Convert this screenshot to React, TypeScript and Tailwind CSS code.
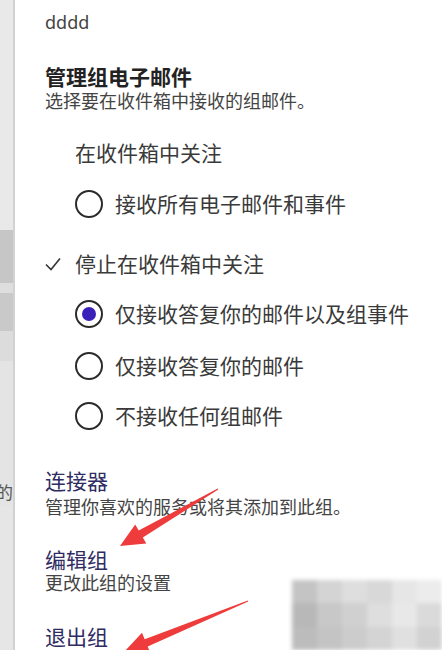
import React from "react";

const font = { fontFamily: '"Noto Sans", "Noto Sans CJK SC", sans-serif' };

type Pt = [number, number];

// tapered red arrow, computed from tail and tip
function arrowPoints(tail: Pt, tip: Pt) {
  const dx = tip[0] - tail[0];
  const dy = tip[1] - tail[1];
  const len = Math.hypot(dx, dy);
  const ux = dx / len;
  const uy = dy / len;
  const nx = -uy;
  const ny = ux;
  const headLen = 24;
  const bx = tip[0] - ux * headLen;
  const by = tip[1] - uy * headLen;
  const p = (x: number, y: number, w: number) => `${(x + nx * w).toFixed(1)},${(y + ny * w).toFixed(1)}`;
  return [
    p(tail[0], tail[1], 0.6),
    p(bx, by, 4),
    p(bx, by, 11),
    `${tip[0]},${tip[1]}`,
    p(bx, by, -11),
    p(bx, by, -4),
    p(tail[0], tail[1], -0.6),
  ].join(" ");
}

function Radio({ checked, label }: { checked?: boolean; label: string }) {
  return (
    <div className="flex items-center h-[30px] pl-[30px] gap-[12px]">
      <div className="w-[28px] h-[28px] rounded-full border-2 border-[#2b2b2b] flex items-center justify-center shrink-0">
        {checked && <div className="w-[14px] h-[14px] rounded-full bg-[#3a20b8]" />}
      </div>
      <span className="text-[21px] leading-[30px] text-[#3a3a3a]">{label}</span>
    </div>
  );
}

const pixelCells = [
  "bg-[#c4c4c4]", "bg-[#d4d4d4]", "bg-[#dedede]", "bg-[#d8d8d8]", "bg-[#e6e6e6]", "bg-[#ececec]",
  "bg-[#b8b8b8]", "bg-[#c8c8c8]", "bg-[#d0d0d0]", "bg-[#dedede]", "bg-[#e8e8e8]", "bg-[#dadada]",
  "bg-[#bcbcbc]", "bg-[#c4c4c4]", "bg-[#cccccc]", "bg-[#d4d4d4]", "bg-[#e0e0e0]", "bg-[#d2d2d2]",
];

export default function App() {
  return (
    <div className="relative w-[442px] h-[650px] overflow-hidden bg-white flex" style={font}>
      {/* background page strip on the left */}
      <div className="w-[15px] h-full flex flex-col bg-[#e6e6e6] border-r-2 border-[#d2d2d2]">
        <div className="h-[230px] bg-[#e9e9e9]" />
        <div className="h-[53px] bg-[#c6c6c6]" />
        <div className="h-[10px] bg-[#dedede]" />
        <div className="h-[38px] bg-[#c9c9c9]" />
        <div className="h-[30px] bg-[#dcdcdc]" />
        <div className="h-[145px] bg-[#e4e4e4] flex items-end overflow-hidden">
          <span className="text-[17px] leading-[22px] text-[#555] -ml-[4px] mb-[2px]">的</span>
        </div>
        <div className="flex-1 bg-[#e6e6e6]" />
      </div>

      {/* panel */}
      <div className="flex-1 pl-[30px] flex flex-col">
        <div className="mt-[10px] text-[18px] leading-[24px] text-[#444]">dddd</div>

        <div className="mt-[30px] text-[21px] leading-[26px] font-bold text-[#222]">管理组电子邮件</div>
        <div className="text-[18px] leading-[22px] text-[#444]">选择要在收件箱中接收的组邮件。</div>

        <div className="mt-[26px] pl-[30px] text-[21px] leading-[30px] text-[#3a3a3a]">在收件箱中关注</div>
        <div className="mt-[21px]">
          <Radio label="接收所有电子邮件和事件" />
        </div>

        <div className="mt-[30px] flex items-center h-[30px]">
          <svg width="30" height="30" viewBox="0 0 30 30" className="shrink-0">
            <path d="M1 15.5 L6 20.5 L15 9.5" fill="none" stroke="#333" strokeWidth="1.6" />
          </svg>
          <span className="text-[21px] leading-[30px] text-[#3a3a3a]">停止在收件箱中关注</span>
        </div>

        <div className="mt-[20px]">
          <Radio checked label="仅接收答复你的邮件以及组事件" />
        </div>
        <div className="mt-[22px]">
          <Radio label="仅接收答复你的邮件" />
        </div>
        <div className="mt-[20px]">
          <Radio label="不接收任何组邮件" />
        </div>

        <div className="mt-[38px] text-[21px] leading-[24px] text-[#2f2c63]">连接器</div>
        <div className="mt-[3px] text-[18px] leading-[22px] text-[#444]">管理你喜欢的服务或将其添加到此组。</div>

        <div className="mt-[30px] text-[21px] leading-[24px] text-[#2f2c63]">编辑组</div>
        <div className="text-[18px] leading-[22px] text-[#444]">更改此组的设置</div>

        <div className="mt-[31px] text-[21px] leading-[24px] text-[#2f2c63]">退出组</div>
      </div>

      {/* blurred patch */}
      <div className="absolute left-[292px] top-[580px] w-[150px] h-[70px] grid grid-cols-6 grid-rows-3 blur-[2px]">
        {pixelCells.map((c, i) => (
          <div key={i} className={c} />
        ))}
      </div>

      {/* annotation arrows */}
      <svg className="absolute inset-0 pointer-events-none" width="442" height="650">
        <polygon points={arrowPoints([218, 489], [120, 546])} fill="#ee3b3b" />
        <polygon points={arrowPoints([248, 601], [124, 652])} fill="#ee3b3b" />
      </svg>
    </div>
  );
}
